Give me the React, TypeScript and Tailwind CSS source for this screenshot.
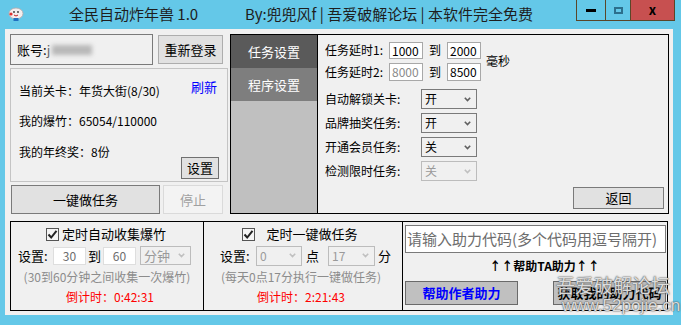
import React from "react";

function Logo() {
  return (
    <svg width="16" height="14" viewBox="0 0 16 14">
      <ellipse cx="8" cy="6.5" rx="7" ry="5.5" fill="#f4eeee" stroke="#b9a8a8" strokeWidth="0.8" />
      <circle cx="3" cy="7" r="1.6" fill="#e03030" />
      <circle cx="6" cy="5" r="0.9" fill="#333" />
      <circle cx="10" cy="5" r="0.9" fill="#333" />
      <path d="M6 8 Q8 10 10 8" stroke="#c02020" strokeWidth="1" fill="none" />
      <rect x="5.5" y="11" width="5" height="3" fill="#2070c0" />
    </svg>
  );
}

function Chevron({ color }: { color: string }) {
  return (
    <svg width="7" height="5" viewBox="0 0 7 5">
      <path d="M0.8 0.8 L3.5 3.6 L6.2 0.8" stroke={color} strokeWidth="1.6" fill="none" />
    </svg>
  );
}

function Select({
  value,
  disabled,
  className,
}: {
  value: string;
  disabled?: boolean;
  className: string;
}) {
  return (
    <div
      className={`flex items-center justify-between bg-[#f0f0f0] border pl-[3px] pr-[5px] ${
        disabled ? "border-[#bcbcbc] text-[#9a9a9a]" : "border-[#7a7a7a] text-black"
      } ${className}`}
    >
      <span>{value}</span>
      <Chevron color={disabled ? "#c0c0c0" : "#606060"} />
    </div>
  );
}

function Check() {
  return (
    <div className="w-[13px] h-[13px] border border-[#555] bg-[#f4f4f4] flex items-center justify-center">
      <svg width="11" height="11" viewBox="0 0 11 11">
        <path d="M1.5 5.5 L4.2 8.5 L9.5 1.8" stroke="#222" strokeWidth="2" fill="none" />
      </svg>
    </div>
  );
}

export default function App() {
  return (
    <div className="relative w-[681px] h-[325px] overflow-hidden bg-[#64c8e8] font-['Noto_Sans_CJK_SC',sans-serif] text-[12px] leading-[16px] text-black">
      {/* title bar */}
      <div className="flex h-[29px] items-start">
        <div className="w-[69px] pl-[8px] pt-[7px]">
          <Logo />
        </div>
        <div className="w-[176px] pt-[4px] text-[15px] leading-[20px] text-[#1e1e1e]">全民自动炸年兽 1.0</div>
        <div className="pt-[4px] text-[15px] leading-[20px] text-[#1e1e1e]">
          By:兜兜风f | 吾爱破解论坛 | 本软件完全免费
        </div>
        <div className="ml-auto mr-[6px] flex h-[21px]">
          <div className="w-[29px] border-l border-b border-[#5a4628] flex items-center justify-center">
            <div className="w-[10px] h-[3px] bg-black" />
          </div>
          <div className="w-[25px] border-l border-b border-[#5a4628] flex items-center justify-center">
            <div className="w-[9px] h-[7px] border-2 border-[#2c6f8c]" />
          </div>
          <div className="w-[45px] border-x border-b border-[#5a4628] bg-[#c75050] flex items-center justify-center text-[13px] font-bold">
            x
          </div>
        </div>
      </div>

      {/* client area */}
      <div className="ml-[5px] w-[668px] h-[286px] bg-[#f0f0f0] pt-[5px] pl-[5px]">
        <div className="flex gap-[2px] h-[180px]">
          {/* left column */}
          <div className="w-[218px] flex flex-col">
            <div className="flex h-[31px] gap-[5px] items-center">
              <div className="w-[143px] h-[31px] border border-[#7a7a7a] flex items-center pl-[6px] text-[13px]">
                <span>账号:</span>
                <span className="text-[#666]">j</span>
                <div className="ml-[2px] w-[40px] h-[10px] bg-[#b8b8b8] blur-[2px]" />
              </div>
              <button className="w-[65px] h-[29px] bg-[#e1e1e1] border border-[#adadad] text-[13px]">重新登录</button>
            </div>

            <div className="mt-[3px] h-[114px] border border-[#c4c4c4] flex flex-col pl-[8px] pr-[8px]">
              <div className="flex justify-between items-start pt-[10px]">
                <span className="pt-[4px]">当前关卡：年货大街(8/30)</span>
                <span className="text-[#0000ff] text-[13px] pr-[2px]">刷新</span>
              </div>
              <div className="mt-[14px]">我的爆竹：65054/110000</div>
              <div className="flex justify-between items-start mt-[15px]">
                <span>我的年终奖：8份</span>
                <button className="mt-[13px] w-[38px] h-[22px] bg-[#e1e1e1] border border-[#707070] text-[13px]">设置</button>
              </div>
            </div>

            <div className="mt-[3px] flex gap-[3px] pl-[1px]">
              <button className="w-[149px] h-[29px] bg-[#e1e1e1] border border-[#7a7a7a] text-[13px]">一键做任务</button>
              <button className="w-[60px] h-[29px] bg-[#f3f3f3] border border-[#dadada] text-[13px] text-[#a0a0a0]">停止</button>
            </div>
          </div>

          {/* right panel */}
          <div className="w-[439px] h-[180px] border border-black flex">
            <div className="w-[87px] bg-[#c0c0c0] border-r border-black flex flex-col">
              <div className="h-[33px] bg-[#5a5a5a] text-white text-[13px] flex items-center justify-center">任务设置</div>
              <div className="h-[33px] bg-[#7e7e7e] text-white text-[13px] flex items-center justify-center">程序设置</div>
            </div>
            <div className="flex-1 flex flex-col pl-[7px] pt-[6px]">
              <div className="flex items-center">
                <div className="flex flex-col gap-[4px]">
                  <div className="flex items-center h-[18px]">
                    <span className="w-[64px]">任务延时1:</span>
                    <div className="w-[34px] h-[17px] bg-white border border-[#a8a8a8] pl-[2px] leading-[15px]">1000</div>
                    <span className="mx-[6px]">到</span>
                    <div className="w-[34px] h-[17px] bg-white border border-[#a8a8a8] pl-[2px] leading-[15px]">2000</div>
                  </div>
                  <div className="flex items-center h-[18px]">
                    <span className="w-[64px]">任务延时2:</span>
                    <div className="w-[34px] h-[18px] bg-white border border-[#a8a8a8] pl-[2px] leading-[16px] text-[#8a8a8a]">8000</div>
                    <span className="mx-[6px]">到</span>
                    <div className="w-[34px] h-[18px] bg-white border border-[#a8a8a8] pl-[2px] leading-[16px]">8500</div>
                  </div>
                </div>
                <span className="ml-[5px]">毫秒</span>
              </div>

              <div className="mt-[8px] flex flex-col gap-[4px]">
                <div className="flex items-center h-[20px]">
                  <span className="w-[96px]">自动解锁关卡:</span>
                  <Select value="开" className="w-[56px] h-[20px]" />
                </div>
                <div className="flex items-center h-[20px]">
                  <span className="w-[96px]">品牌抽奖任务:</span>
                  <Select value="开" className="w-[56px] h-[20px]" />
                </div>
                <div className="flex items-center h-[20px]">
                  <span className="w-[96px]">开通会员任务:</span>
                  <Select value="关" className="w-[56px] h-[20px]" />
                </div>
                <div className="flex items-center h-[20px]">
                  <span className="w-[96px]">检测限时任务:</span>
                  <Select value="关" disabled className="w-[56px] h-[20px]" />
                </div>
              </div>

              <div className="mt-auto flex justify-end pr-[4px] pb-[4px]">
                <button className="w-[91px] h-[22px] bg-[#e1e1e1] border border-[#7a7a7a] text-[13px]">返回</button>
              </div>
            </div>
          </div>
        </div>

        {/* bottom boxes */}
        <div className="mt-[7px] w-[658px] h-[90px] border border-black flex">
          <div className="w-[193px] border-r border-black flex flex-col items-center pt-[4px]">
            <div className="flex items-center gap-[3px] h-[16px] pr-[2px]">
              <Check />
              <span className="text-[13px]">定时自动收集爆竹</span>
            </div>
            <div className="mt-[4px] self-start pl-[7px] flex items-center h-[19px]">
              <span className="w-[35px] text-[13px]">设置:</span>
              <div className="w-[33px] h-[18px] bg-white border border-[#dedede] text-center text-[#6d6d6d] leading-[16px]">30</div>
              <span className="w-[17px] text-center text-[13px]">到</span>
              <div className="w-[33px] h-[18px] bg-white border border-[#dedede] text-center text-[#6d6d6d] leading-[16px]">60</div>
              <Select value="分钟" disabled className="ml-[4px] w-[51px] h-[19px] text-[13px]" />
            </div>
            <div className="mt-[4px] text-[#8c8c8c] text-[12px]">(30到60分钟之间收集一次爆竹)</div>
            <div className="mt-[4px] text-[#ff0000] pl-[6px]">倒计时：0:42:31</div>
          </div>

          <div className="w-[199px] border-r border-black flex flex-col items-center pt-[4px]">
            <div className="flex items-center gap-[11px] h-[16px] pr-[6px]">
              <Check />
              <span className="text-[13px]">定时一键做任务</span>
            </div>
            <div className="mt-[4px] self-start pl-[16px] flex items-center h-[19px]">
              <span className="w-[36px] text-[13px]">设置:</span>
              <Select value="0" disabled className="w-[46px] h-[20px]" />
              <span className="w-[26px] pl-[4px] text-[13px]">点</span>
              <Select value="17" disabled className="w-[47px] h-[20px]" />
              <span className="pl-[3px] text-[13px]">分</span>
            </div>
            <div className="mt-[4px] text-[#8c8c8c] pr-[4px]">(每天0点17分执行一键做任务)</div>
            <div className="mt-[4px] text-[#ff0000] pr-[4px]">倒计时：2:21:43</div>
          </div>

          <div className="flex-1 flex flex-col pl-[2px] pr-[1px] pt-[3px]">
            <div className="h-[28px] bg-white border border-[#7a7a7a] flex items-center pl-[1px] text-[15px] text-[#6d6d6d] whitespace-nowrap overflow-hidden">
              请输入助力代码(多个代码用逗号隔开)
            </div>
            <div className="mt-[5px] pl-[18px] text-center font-bold text-[12px]">↑↑帮助TA助力↑↑</div>
            <div className="mt-[7px] flex justify-between">
              <button className="w-[113px] h-[24px] bg-[#c0c0c0] border border-[#6a6a6a] text-[#0000ff] font-bold text-[13px]">帮助作者助力</button>
              <button className="w-[113px] h-[24px] bg-[#c0c0c0] border border-[#6a6a6a] font-bold text-[13px]">获取我的助力代码</button>
            </div>
          </div>
        </div>
      </div>

      {/* watermark */}
      <div className="absolute left-[556px] top-[274px] flex flex-col text-white/80 [text-shadow:0_0_2px_#555,0_0_1px_#333] pointer-events-none">
        <span className="text-[19px] leading-[22px] tracking-[0px]">吾爱破解论坛</span>
        <span className="text-[17px] leading-[20px] pl-[6px] font-['Liberation_Sans',sans-serif]">www.52pojie.cn</span>
      </div>
    </div>
  );
}
